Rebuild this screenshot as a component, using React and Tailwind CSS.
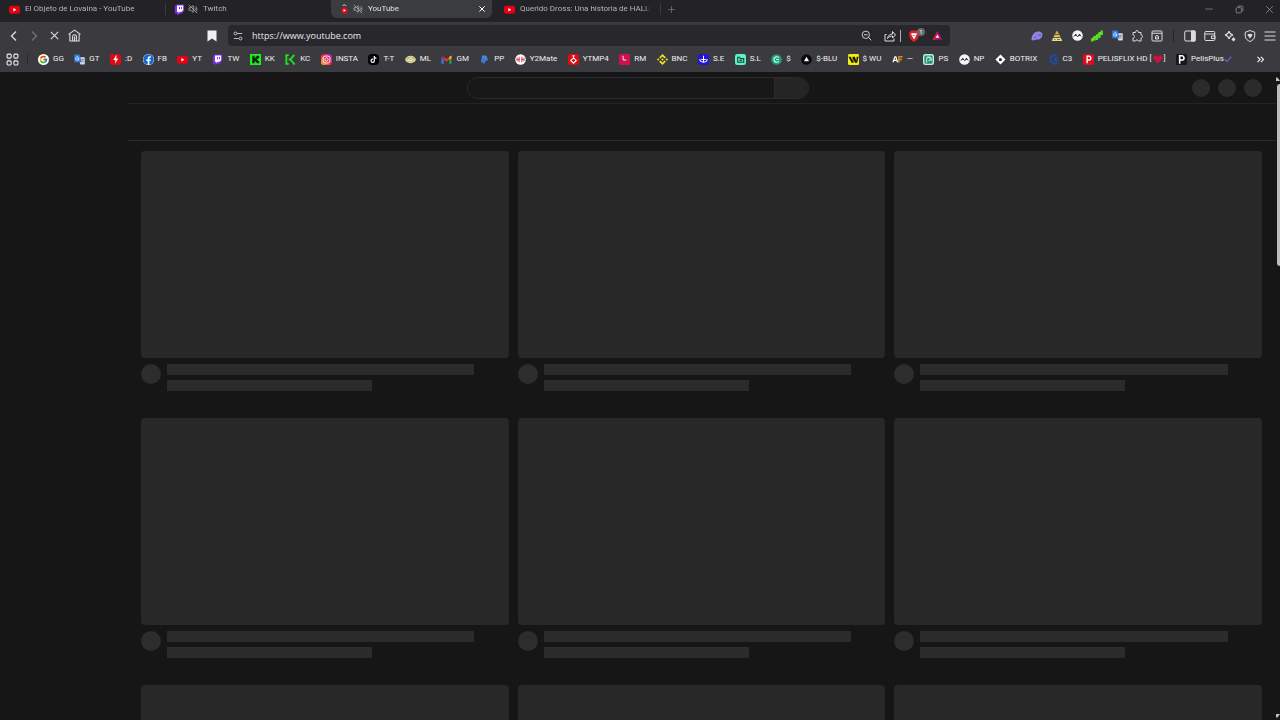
import React from "react";
import { FcGoogle } from "react-icons/fc";
import { FaFacebook, FaPaypal, FaTiktok } from "react-icons/fa";
import { SiBinance } from "react-icons/si";

function Stroke({ className = "size-3", w = 1.6, children }) {
  return (
    <svg viewBox="0 0 24 24" fill="none" stroke="currentColor" strokeWidth={w} className={`shrink-0 ${className}`} aria-hidden="true">
      {children}
    </svg>
  );
}

function Pic({ className = "size-[11px]", children }) {
  return (
    <svg viewBox="0 0 24 24" className={`shrink-0 ${className}`} aria-hidden="true">
      {children}
    </svg>
  );
}

const YouTubeIcon = () => (
  <Pic>
    <rect x="0" y="4" width="24" height="17" rx="4.5" fill="#e60012" />
    <path d="M9.5 8.8v7.4l6.5-3.7z" fill="#fff" />
  </Pic>
);

const TwitchIcon = () => (
  <Pic>
    <path d="M5 1h17v14l-6 6h-4l-3 3H7v-3H2V5z" fill="#7b2cf0" />
    <path d="M6.500 3h13.500v10.500l-3.500 3.500h-4l-3 3v-3h-3z" fill="#fff" />
    <path d="M11 6.500h2v5h-2zM15.500 6.500h2v5h-2z" fill="#7b2cf0" />
  </Pic>
);

const TranslateIcon = () => (
  <Pic>
    <path d="M9 7h13a1.500 1.500 0 0 1 1.500 1.500v13A1.500 1.500 0 0 1 22 23h-8z" fill="#d9dde3" />
    <path d="M2 1h10l5 17H2a1.500 1.500 0 0 1-1.500-1.500v-14A1.500 1.500 0 0 1 2 1z" fill="#2f7de1" />
    <path d="M11 9.500H7.500M11 9.500a3.700 3.700 0 1 1-1.200-2.400" stroke="#fff" strokeWidth="1.700" fill="none" />
    <path d="M15.500 12h6M18.500 10.500V12M20.500 12c-.5 3-2 4.500-4 6M17 14c1 2 2.500 3.500 4.500 4.500" stroke="#5b6b80" strokeWidth="1.200" fill="none" />
  </Pic>
);

const MutedIcon = () => (
  <Stroke className="size-[10px] text-[#b9b9bd]" w={1.800}>
    <path d="M2.500 9v6h4l6 5V4l-6 5zM16 8.500c2 2 2 5 0 7M18.500 5.500c4 3.500 4 9.500 0 13M2 2l20 20" />
  </Stroke>
);

const CircleWave = () => (
  <Pic>
    <circle cx="12" cy="12" r="11.500" fill="#f5f5f5" />
    <path d="M4 14.500 8 10l4.500 4.500 3.500-4.500 4 4" stroke="#161616" strokeWidth="2" fill="none" />
    <circle cx="8" cy="11" r="1.800" fill="#161616" />
    <circle cx="16.500" cy="11" r="1.800" fill="#161616" />
  </Pic>
);

const KickIcon = () => (
  <Pic>
    <path d="M0 0h24v24H0z" fill="#1cf21c" />
    <path d="M5 4h5v4.500h2V6h2.500V4H20v5h-2.500v2h-2v2h2v2H20v5h-5.500v-2H12v-2.500h-2V20H5z" fill="#0a240a" />
  </Pic>
);

const BOOKMARKS = [
  ["GG", <FcGoogle className="size-[11px] shrink-0 rounded-full bg-white p-px" />],
  ["GT", <TranslateIcon />],
  [":D", <Pic><rect width="24" height="24" rx="4" fill="#d80a16" /><path d="M13 3 7 13h5l-1 8 7-11h-5l2-7z" fill="#fff" /></Pic>],
  ["FB", <FaFacebook className="size-[11px] shrink-0 rounded-full bg-white text-[#1267d6]" />],
  ["YT", <YouTubeIcon />],
  ["TW", <TwitchIcon />],
  ["KK", <KickIcon />],
  ["KC", <Pic><path d="M8 2.500H3v19h5M8 12h4l8-10M12 12l9 11" stroke="#1ce81c" strokeWidth="4" fill="none" /></Pic>],
  ["INSTA", (
    <Pic>
      <defs><linearGradient id="ig" x1="0" y1="1" x2="1" y2="0"><stop offset="0" stopColor="#fdb83c" /><stop offset=".5" stopColor="#f0243f" /><stop offset="1" stopColor="#8a2be2" /></linearGradient></defs>
      <rect width="24" height="24" rx="6" fill="url(#ig)" />
      <rect x="4.500" y="4.500" width="15" height="15" rx="4.500" fill="none" stroke="#fff" strokeWidth="2" />
      <circle cx="12" cy="12" r="3.600" fill="none" stroke="#fff" strokeWidth="2" />
    </Pic>
  )],
  ["T-T", <FaTiktok className="size-[11px] shrink-0 rounded-sm bg-black p-0.5 text-white" />],
  ["ML", <Pic><ellipse cx="12" cy="12" rx="11.500" ry="8" fill="#e2df8e" /><ellipse cx="12" cy="11.500" rx="8.500" ry="4.500" fill="#fbfbe8" stroke="#77733a" /><path d="M5 11c4-3 5 2 8 1s4-3 6-1" stroke="#77733a" strokeWidth="1.600" fill="none" /></Pic>],
  ["GM", <Pic><path d="M1 7v14h5V11z" fill="#2e7cf0" /><path d="M18 11v10h5V7z" fill="#1ea554" /><path d="M4 5l8 6.500L20 5v6l-8 6-8-6z" fill="#e5372b" /><path d="M18 6l5-3v6l-5 3z" fill="#f6b91c" /><path d="M1 4l5 3v5L1 8z" fill="#b52222" /></Pic>],
  ["PP", <FaPaypal className="size-[11px] shrink-0 p-px text-[#3f86e8]" />],
  ["Y2Mate", <Pic><circle cx="12" cy="12" r="11.500" fill="#fff" /><path d="M4.500 8v8M19.500 8v8M9 6v12M15 6v12M5 12h4m6 0h4" stroke="#d81b45" strokeWidth="2" /></Pic>],
  ["YTMP4", <Pic><rect width="24" height="24" rx="6" fill="#e00a14" /><path d="M12 4v5M9 4h6" stroke="#fff" strokeWidth="2" /><path d="M12 8.500 18 14l-6 6-6-6z" fill="none" stroke="#fff" strokeWidth="2.400" /></Pic>],
  ["RM", <Pic><rect width="24" height="24" rx="2" fill="#d0104c" /><path d="M9 4v9h7" stroke="#fff" strokeWidth="2" fill="none" /></Pic>],
  ["BNC", <SiBinance className="size-[11px] shrink-0 text-[#f0e020]" />],
  ["S.E", <Pic><rect width="24" height="24" rx="5" fill="#2413d8" /><path d="M12 4v14M4 11c0 9 16 9 16 0M7 12h10" stroke="#fff" strokeWidth="2.200" fill="none" /></Pic>],
  ["S.L", <Pic><rect width="24" height="24" rx="5" fill="#5ff0c4" /><path d="M6 18V7h4l2 3h7v8z" fill="none" stroke="#14443a" strokeWidth="2.400" /><path d="M10 14h5" stroke="#14443a" strokeWidth="3" /></Pic>],
  ["$", <Pic><circle cx="12" cy="12" r="11.500" fill="#1f9e7a" /><path d="M17 8a6 6 0 1 0 0 8M11 12h6" stroke="#d8fff0" strokeWidth="2.400" fill="none" /></Pic>],
  ["$-BLU", <Pic><circle cx="12" cy="12" r="11.500" fill="#0b0b0b" /><path d="m12 6 5.500 10h-11z" fill="#fff" /></Pic>],
  ["$ WU", <Pic><rect width="24" height="24" rx="3" fill="#f2ec12" /><path d="M1 6h5l4 9V6h5l3 9 1-9h4l-3 13h-5l-3-8v8H8z" fill="#191900" /></Pic>],
  ["—", <Pic><path d="m2 18 4.500-12h2L12 18M4 14h6" stroke="#fff" strokeWidth="2.600" fill="none" /><path d="M15 19V6h8M15 12h7" stroke="#e08b20" strokeWidth="3" fill="none" /></Pic>],
  ["PS", <Pic><rect width="24" height="24" rx="5" fill="#bdf0dc" /><rect x="3" y="3" width="18" height="18" rx="3" fill="#2c8f73" /><path d="M8 19v-8a4 4 0 1 1 4 4M8 7h8a3 3 0 0 1 2 3v5" stroke="#d5fff0" strokeWidth="2" fill="none" /></Pic>],
  ["NP", <CircleWave />],
  ["BOTRIX", <Pic><path d="m12 1 11 11-11 11L1 12z" fill="#fff" /><path d="M9 9h5l1 3-1 3H9z" fill="#26262a" /></Pic>],
  ["C3", <Pic><path d="M20 5A9 9 0 1 0 20 19" stroke="#1d49b8" strokeWidth="4" fill="none" /><path d="M22 9h-7v6h7" stroke="#2857cc" strokeWidth="2" fill="none" /></Pic>],
  [<>PELISFLIX HD [<Pic className="mx-px size-[10px]"><path d="M12 22 2 12C-1 7 3 2 7 3l5 4 5-4c4-1 8 4 5 9z" fill="#d3103f" /></Pic>]</>, <Pic><rect width="24" height="24" rx="4" fill="#e00b1c" /><path d="M9 20V5h4a4 4 0 0 1 0 8H9" stroke="#fff" strokeWidth="3" fill="none" /></Pic>],
  [<>PelisPlus<Stroke className="size-2 text-[#6d5ae6]" w={3.600}><path d="m2 12 7 8L22 5" /></Stroke></>, <Pic><rect width="24" height="24" rx="3" fill="#17171a" /><path d="M8 21V4h5a4.500 4.500 0 0 1 0 9H8" stroke="#fff" strokeWidth="3.400" fill="none" /></Pic>],
];

function Tab({ icon, title, muted, active, closable, divider }) {
  return (
    <div className="flex h-[18px] w-[165px] shrink-0 items-center">
      <div className={`flex h-full min-w-0 flex-1 items-center gap-[3px] rounded-b-md pr-1.5 pl-2 ${active ? "bg-[#3b3c40] text-[#e2e2e5]" : "text-[#b4b4b8]"}`}>
        <button className="flex min-w-0 flex-1 items-center gap-[3px] overflow-hidden whitespace-nowrap">
          {icon}
          {muted && <MutedIcon />}
          <span className="ml-0.5 flex-1 overflow-hidden mask-r-from-95% text-left">{title}</span>
        </button>
        {closable && (
          <button aria-label="Close tab" className="text-white">
            <Stroke className="size-2" w={3}><path d="M4 4l16 16M20 4 4 20" /></Stroke>
          </button>
        )}
      </div>
      <span className={`h-3 w-1 border-r ${divider ? "border-[#3a3a3e]" : "border-transparent"}`} />
    </div>
  );
}

function ToolButton({ label, dim, children }) {
  return (
    <button aria-label={label} className={`flex size-5 shrink-0 items-center justify-center ${dim ? "text-[#77777b]" : "text-[#dcdce0]"}`}>
      {children}
    </button>
  );
}

function VideoSkeleton() {
  return (
    <div>
      <div className="aspect-video rounded bg-[#282828]" />
      <div className="flex gap-[6px] pt-[6px]">
        <div className="size-5 shrink-0 rounded-full bg-[#2d2d2d]" />
        <div className="flex flex-1 flex-col gap-[5px]">
          <div className="h-[11px] w-9/10 bg-[#2b2b2b]" />
          <div className="h-[11px] w-3/5 bg-[#2b2b2b]" />
        </div>
      </div>
    </div>
  );
}

export default function App() {
  return (
    <div className="flex h-screen flex-col overflow-hidden bg-[#161616] font-['Roboto','Open_Sans',sans-serif] text-[8px] leading-3">
      <header className="shrink-0 bg-[#232327]">
        <div className="flex h-[22px]">
          <div className="flex pl-px">
            <Tab icon={<YouTubeIcon />} title="El Objeto de Lovaina - YouTube" divider />
            <Tab icon={<TwitchIcon />} title="Twitch" muted />
            <Tab
              active
              muted
              closable
              title="YouTube"
              icon={<Pic><circle cx="12" cy="14" r="7" fill="#d9101c" /><path d="M10 11v6l5-3z" fill="#fff" /><path d="M8 3q4-3 8 1" stroke="#ddd" strokeWidth="2" fill="none" /></Pic>}
            />
            <Tab icon={<YouTubeIcon />} title="Querido Dross: Una historia de HALLOWEEN" divider />
          </div>
          <button aria-label="New tab" className="ml-1.5 flex h-[18px] items-center text-[#77777b]">
            <Stroke className="size-[9px]" w={2}><path d="M12 3v18M3 12h18" /></Stroke>
          </button>
          <div className="ml-auto flex h-[18px] items-center gap-[21px] pr-1.5 text-[#9a9a9e]">
            <button aria-label="Minimize"><Stroke className="size-[10px]"><path d="M3 12h18" /></Stroke></button>
            <button aria-label="Restore"><Stroke className="size-[9px]" w={2}><rect x="3" y="7" width="14" height="14" rx="3" /><path d="M7 3h11a3 3 0 0 1 3 3v11" /></Stroke></button>
            <button aria-label="Close"><Stroke className="size-[9px]" w={2}><path d="M3 3l18 18M21 3 3 21" /></Stroke></button>
          </div>
        </div>

        <div className="bg-[#3b3b3f]">
          <div className="flex items-center pt-[3px] pl-1">
            <ToolButton label="Back"><Stroke w={2.800}><path d="M16 3 7 12l9 9" /></Stroke></ToolButton>
            <ToolButton label="Forward" dim><Stroke w={2.400}><path d="m8 3 9 9-9 9" /></Stroke></ToolButton>
            <ToolButton label="Stop"><Stroke className="size-[11px]" w={2.400}><path d="M4 4l16 16M20 4 4 20" /></Stroke></ToolButton>
            <ToolButton label="Home"><Stroke className="size-[13px]" w={2}><path d="M1 10 12 2l11 8M3.500 9v13h17V9M8.500 22v-8a3.500 3.500 0 0 1 7 0v8M12 14v8" /></Stroke></ToolButton>
            <div className="ml-[118px] flex">
              <ToolButton label="Bookmark this page"><Pic className="size-3"><path d="M3 1h18v22l-9-6-9 6z" fill="#f0f0f2" /></Pic></ToolButton>
            </div>
            <div className="ml-1.5 flex h-[21px] flex-1 items-center rounded bg-[#28282c] pr-[3px]">
              <ToolButton label="Site information"><Stroke className="size-[10px]" w={2}><circle cx="6" cy="6" r="3.500" /><path d="M10 6h12M2 18h11" /><circle cx="18" cy="18" r="3.500" /></Stroke></ToolButton>
              <input aria-label="Address" defaultValue="https://www.youtube.com" className="ml-1 min-w-0 flex-1 bg-transparent font-['Open_Sans','Noto_Sans',sans-serif] text-[9px] text-[#e8e8ea] outline-none" />
              <ToolButton label="Zoom"><Stroke className="size-[11px]" w={2}><circle cx="10.500" cy="10.500" r="8" /><path d="m16.500 16.500 6 6M6.500 10.500h8" /></Stroke></ToolButton>
              <div className="ml-1 flex items-center">
                <ToolButton label="Share"><Stroke w={2}><path d="M5 9H2v13h18v-5M7 17c1-6 5-9 10-9V3l6 7-6 6v-4c-4 0-7 1-10 5z" /></Stroke></ToolButton>
                <span className="h-3 w-px bg-[#b0b0b4]" />
              </div>
              <button aria-label="Brave Shields" className="relative flex h-5 w-[26px] items-center justify-center">
                <Pic className="size-3"><path d="m7 1-4 3-1 5 3 10 7 5 7-5 3-10-1-5-4-3z" fill="#e0202c" /><path d="m6 7 4-1 2 1 2-1 4 1-2 5-4 7-4-7zM9 11l3 1 3-1" fill="#fff" /><path d="m9 10 2 1-1 2zm6 0-2 1 1 2z" fill="#e0202c" /></Pic>
                <span className="absolute top-0.5 right-0.5 flex size-2 items-center justify-center rounded-full bg-[#68686c] text-[6px] text-white">1</span>
              </button>
              <ToolButton label="Rewards"><Pic><path d="m12 2 11 19H1z" fill="#a01274" /><path d="M12 2 6 12.500 1 21h8z" fill="#d81d2f" /><path d="m12 10 4 7H8z" fill="#fff" /></Pic></ToolButton>
            </div>
            <div className="ml-[77px] flex">
              <ToolButton label="Eye extension"><Pic className="size-3"><path d="M1 18C2 6 12 1 19 4c5 2 5 8 1 12-4 5-8 2-12 4-3 1-7 2-7-2z" fill="#9284e4" /><path d="M14 10h6M7 17c1-3 2-4 4-4" stroke="#5c4fb0" strokeWidth="2" fill="none" /></Pic></ToolButton>
              <ToolButton label="Pyramid extension"><Pic className="size-3"><path d="m12 1 4 7H8z" fill="#e0a64b" /><path d="M7.500 9h9l2.500 5H5z" fill="#c9c06a" /><path d="M4.500 15h15l3 7h-21z" fill="#dfe08c" /><path d="M4 15h16M7 9h10M6 19h3m3 0h6" stroke="#6b4a22" strokeWidth="1.500" /></Pic></ToolButton>
              <ToolButton label="Wave extension"><CircleWave /></ToolButton>
              <ToolButton label="Chart extension"><Pic className="size-3"><path d="M2.500 23v-6M7 21v-9M12 20V9M17 16V4M21.500 10V1" stroke="#5dde20" strokeWidth="4.600" /><path d="M1 20 22 4" stroke="#5dde20" strokeWidth="4" /></Pic></ToolButton>
              <ToolButton label="Translate"><TranslateIcon /></ToolButton>
              <ToolButton label="Extensions"><Stroke w={2}><path d="M4 5h5c-1-5 7-5 6 0h5v5c4 0 4 6 0 6v6h-5c0-3-6-3-6 0H4v-6c4 0 4-6 0-6z" /></Stroke></ToolButton>
              <ToolButton label="Archive"><Stroke w={2}><rect x="2" y="2" width="20" height="20" rx="2" /><path d="M2 6.500h20" /><path d="M9 18v-4a3 3 0 0 1 6 0v4zM11 15h2" /></Stroke></ToolButton>
            </div>
            <span className="mx-[6px] h-3 w-px bg-[#232327]" />
            <div className="flex">
              <ToolButton label="Sidebar"><Stroke w={2}><rect x="1.500" y="2" width="21" height="20" rx="2" /><path d="M15 2h7v20h-7z" fill="currentColor" /></Stroke></ToolButton>
              <ToolButton label="Wallet"><Stroke w={2}><rect x="1.500" y="3" width="20" height="18" rx="2" /><path d="M2 8h20M22 12h-7v5h7z" /></Stroke></ToolButton>
              <ToolButton label="Assistant"><Stroke w={2.400}><path d="M10 2c1 5 3 7 8 8-5 1-7 3-8 8-1-5-3-7-8-8 5-1 7-3 8-8z" /><path d="m19 14 4 5-4 4-4-4z" fill="currentColor" stroke="none" /></Stroke></ToolButton>
              <ToolButton label="VPN"><Stroke w={2}><path d="M12 1 2.500 4.500V12c0 6 5 9 9.500 11 4.500-2 9.500-5 9.500-11V4.500z" /><path d="M6.500 9.500q5.500-4 11 0L12 17z" fill="currentColor" stroke="none" /></Stroke></ToolButton>
              <ToolButton label="Menu"><Stroke w={2}><path d="M1 4h22M1 12h22M1 20h22" /></Stroke></ToolButton>
            </div>
          </div>

          <nav aria-label="Bookmarks" className="flex h-[26px] items-center pr-[15px] pl-1.5 text-[#f0f0f2]">
            <button aria-label="All bookmarks"><Stroke className="size-[13px]" w={2}><rect x="2" y="2" width="7.500" height="7.500" rx="2" /><rect x="14.500" y="2" width="7.500" height="7.500" rx="2" /><rect x="2" y="14.500" width="7.500" height="7.500" rx="2" /><rect x="14.500" y="14.500" width="7.500" height="7.500" rx="2" /></Stroke></button>
            <span className="ml-2 h-3 w-px bg-[#2a2a2e]" />
            <ul className="ml-2.5 flex flex-1 justify-between">
              {BOOKMARKS.map(([label, icon], i) => (
                <li key={i}>
                  <a href="#" className="flex items-center gap-1 whitespace-nowrap">
                    {icon}
                    <span className="flex items-center">{label}</span>
                  </a>
                </li>
              ))}
            </ul>
            <button aria-label="More bookmarks" className="ml-6"><Stroke className="size-[9px]" w={3}><path d="m4 5 7 7-7 7M13 5l7 7-7 7" /></Stroke></button>
          </nav>
        </div>
      </header>

      <div className="flex min-h-0 flex-1">
        <div className="flex min-w-0 flex-1 flex-col">
          <div className="grid h-[31px] shrink-0 grid-cols-[1fr_342px_1fr] items-center px-3.5">
            <span />
            <form className="flex h-[22px] overflow-hidden rounded-full border border-[#2b2b2b]">
              <input aria-label="Search" className="min-w-0 flex-1 bg-[#181818] outline-none" />
              <button type="button" aria-label="Search" className="w-[34px] border-l border-[#2b2b2b] bg-[#252525]" />
            </form>
            <div className="flex justify-end gap-2">
              <div className="size-[18px] rounded-full bg-[#2b2b2b]" />
              <div className="size-[18px] rounded-full bg-[#2b2b2b]" />
              <div className="size-[18px] rounded-full bg-[#2b2b2b]" />
            </div>
          </div>
          <div className="ml-32 h-[38px] shrink-0 border-y border-t-[#242424] border-b-[#2b2b2b]" />
          <main className="grid min-h-0 flex-1 auto-rows-min grid-cols-3 gap-x-[9px] gap-y-[27px] overflow-hidden pt-[10px] pr-[14px] pl-[141px]">
            {Array.from({ length: 9 }, (_, i) => <VideoSkeleton key={i} />)}
          </main>
        </div>
        <div className="flex w-1 shrink-0 flex-col items-end overflow-hidden">
          <Pic className="mt-1 size-1.5"><path d="M12 4 24 20H0z" fill="#c4c4c4" /></Pic>
          <div className="mt-0.5 h-[182px] w-[3px] rounded-l bg-[#bdbdbd]" />
          <Pic className="mt-auto mb-px size-1.5"><path d="M0 4h24L12 20z" fill="#c4c4c4" /></Pic>
        </div>
      </div>
    </div>
  );
}
